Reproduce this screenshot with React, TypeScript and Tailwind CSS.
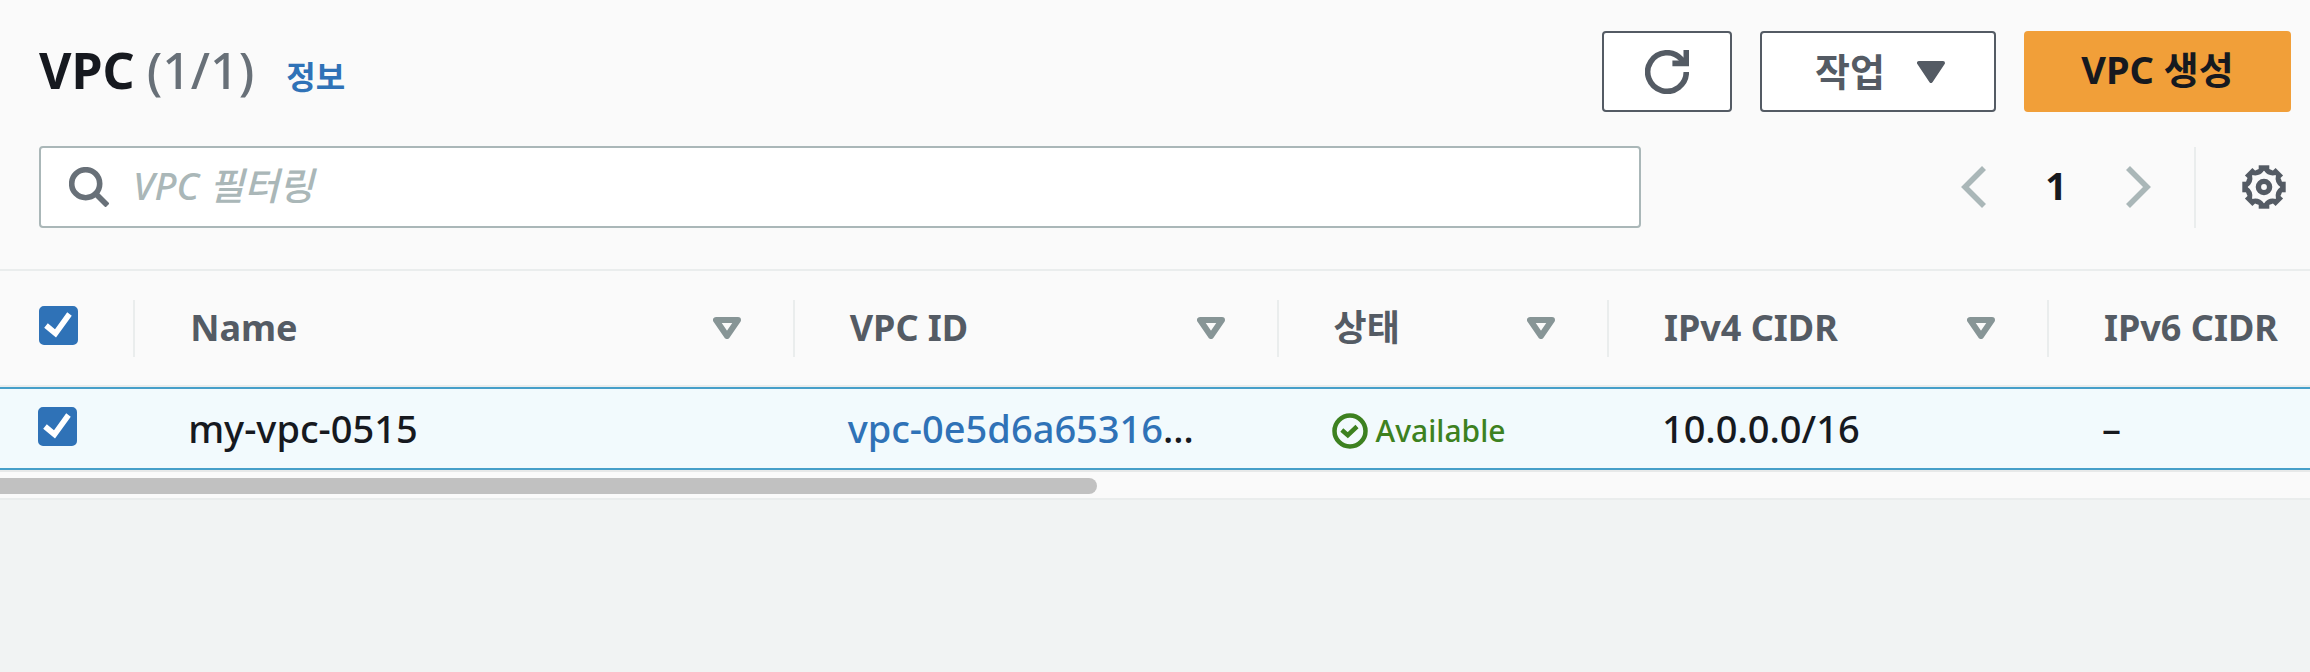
import { useState } from "react";

const columns = [
  { key: "name", label: "Name" },
  { key: "id", label: "VPC ID" },
  { key: "state", label: "상태" },
  { key: "v4", label: "IPv4 CIDR" },
  { key: "v6", label: "IPv6 CIDR" },
];

const toothAngles = [0, 45, 90, 135, 180, 225, 270, 315];

function RefreshIcon() {
  return (
    <svg viewBox="0 0 44 44" className="size-11" fill="none" stroke="currentColor" strokeWidth="5.6" aria-hidden="true">
      <path d="M41.300 22A19.300 19.300 0 1 1 36.500 9.300L39 12.500" />
      <path d="M41.300 0v13.400H27.400" />
    </svg>
  );
}

function SearchIcon() {
  return (
    <svg viewBox="0 0 40 40" className="size-10 shrink-0" fill="none" stroke="currentColor" strokeWidth="5.6" aria-hidden="true">
      <circle cx="16.700" cy="16.700" r="14" />
      <path d="M26.500 26.500l12 12" />
    </svg>
  );
}

function Chevron({ flip = false }: { flip?: boolean }) {
  return (
    <svg viewBox="0 0 26 42" className="h-[42px] w-[26px]" fill="none" stroke="currentColor" strokeWidth="5.6" aria-hidden="true">
      <path d={flip ? "M3 2l19 19L3 40" : "M23 2L4 21l19 19"} />
    </svg>
  );
}

function GearIcon() {
  return (
    <svg viewBox="0 0 44 44" className="size-11" fill="currentColor" aria-hidden="true">
      <path
        fillRule="evenodd"
        d="M22 3.300a18.700 18.700 0 1 1 0 37.400a18.700 18.700 0 1 1 0-37.400zM22 5.500Q26.200 11.800 34 10Q32.200 17.800 38.500 22Q32.200 26.200 34 34Q26.200 32.200 22 38.500Q17.800 32.200 10 34Q11.800 26.200 5.500 22Q11.800 17.800 10 10Q17.800 11.800 22 5.500z"
      />
      {toothAngles.map((angle) => (
        <rect key={angle} x="16.700" y="0.300" width="10.600" height="5.200" transform={`rotate(${angle} 22 22)`} />
      ))}
      <circle cx="22" cy="22" r="5.600" fill="none" stroke="currentColor" strokeWidth="5.4" />
    </svg>
  );
}

function SortIcon() {
  return (
    <svg viewBox="0 0 28 22" className="h-[22px] w-7 shrink-0" fill="none" stroke="currentColor" strokeWidth="6" strokeLinejoin="round" aria-hidden="true">
      <path d="M3 3h22L14 19z" />
    </svg>
  );
}

function Check({ label }: { label: string }) {
  const [on, setOn] = useState(true);
  return (
    <label className="grid size-[39px] place-items-center">
      <input
        type="checkbox"
        aria-label={label}
        checked={on}
        onChange={() => setOn(!on)}
        className="col-start-1 row-start-1 size-[39px] appearance-none rounded-[5px] border-2 border-[#2f72b7] bg-white checked:bg-[#2f72b7]"
      />
      <svg viewBox="0 0 39 39" className="pointer-events-none col-start-1 row-start-1 size-[39px]" fill="none" stroke="white" strokeWidth="5.6" aria-hidden="true">
        {on && <path d="M7 19.500l9.500 8L30.500 8" />}
      </svg>
    </label>
  );
}

export default function App() {
  return (
    <div className="min-h-screen overflow-hidden bg-[#f1f3f3] font-['Noto_Sans','Noto_Sans_CJK_KR',sans-serif] text-[#16191f]">
      <section className="border-b-2 border-[#eaeded] bg-[#fafafa]">
        <header className="flex items-center justify-between pt-[31px] pr-[19px] pl-[39px]">
          <h1 className="flex items-baseline pt-1 text-[50px] leading-[60px] font-bold">
            VPC
            <span className="ml-3 font-medium text-[#687078]">(1/1)</span>
            <a href="#info" className="ml-8 text-[32px] text-[#2f72b7]">정보</a>
          </h1>
          <div className="flex gap-7 text-[38px] font-bold">
            <button type="button" aria-label="새로 고침" className="flex h-[81px] w-[130px] items-center justify-center rounded-[4px] border-2 border-[#545b64] bg-white text-[#545b64]">
              <RefreshIcon />
            </button>
            <button type="button" className="flex h-[81px] w-[236px] items-center justify-center gap-8 rounded-[4px] border-2 border-[#545b64] bg-white pl-1 text-[#545b64]">
              작업
              <svg viewBox="0 0 28 22" className="h-[22px] w-7" fill="currentColor" stroke="currentColor" strokeWidth="4" strokeLinejoin="round" aria-hidden="true">
                <path d="M2 2h24L14 20z" />
              </svg>
            </button>
            <button type="button" className="h-[81px] w-[267px] rounded-[4px] bg-[#f19f39] pb-1">VPC 생성</button>
          </div>
        </header>

        <div className="flex items-center justify-between pt-[34px] pr-6 pb-[41px] pl-[39px]">
          <label className="flex h-[82px] w-[71.3%] items-center gap-6 rounded-[4px] border-2 border-[#aab7b8] bg-white pl-7 text-[#687078]">
            <SearchIcon />
            <input
              type="search"
              aria-label="VPC 필터링"
              placeholder="VPC 필터링"
              className="min-w-0 flex-1 bg-transparent pb-1 text-[38px] font-medium italic outline-none placeholder:text-[#aab7b8]"
            />
          </label>
          <nav aria-label="페이지" className="flex h-[81px] items-center text-[#aab7b8]">
            <button type="button" aria-label="이전 페이지"><Chevron /></button>
            <button type="button" aria-current="page" className="w-[138px] pb-1 text-center text-[38px] font-bold text-[#16191f]">1</button>
            <button type="button" aria-label="다음 페이지"><Chevron flip /></button>
            <span className="ml-[43px] h-full border-l-2 border-[#eaeded]" />
            <button type="button" aria-label="기본 설정" className="ml-[46px] text-[#545b64]"><GearIcon /></button>
          </nav>
        </div>

        <div className="overflow-hidden">
          <table className="w-full table-fixed border-separate border-spacing-0 text-left text-[38px]">
            <colgroup>
              <col className="w-[5.85%]" />
              <col className="w-[28.55%]" />
              <col className="w-[20.95%]" />
              <col className="w-[14.3%]" />
              <col className="w-[19.05%]" />
              <col />
            </colgroup>
            <thead>
              <tr className="h-[118px] text-[36px]">
                <th className="border-y-2 border-[#eaeded] p-0">
                  <div className="flex h-[57px] items-start border-r-2 border-[#eaeded] pt-[6px] pl-[39px]">
                    <Check label="모두 선택" />
                  </div>
                </th>
                {columns.map((column, index) => (
                  <th key={column.key} className="border-y-2 border-[#eaeded] p-0 font-bold whitespace-nowrap text-[#545b64]">
                    <div className={index < 4 ? "flex h-[57px] items-center justify-between border-r-2 border-[#eaeded] pr-[52px] pl-[55px]" : "flex h-[57px] items-center pl-[55px]"}>
                      {column.label}
                      {index < 4 && <span className="text-[#879596]"><SortIcon /></span>}
                    </div>
                  </th>
                ))}
              </tr>
            </thead>
            <tbody>
              <tr className="h-[83px] bg-[#f2fafd] font-medium [&>td]:border-y-2 [&>td]:border-[#469fc9] [&>td]:p-0 [&>td]:whitespace-nowrap">
                <td><div className="pb-1 pl-[38px]"><Check label="my-vpc-0515" /></div></td>
                <td><div className="pl-[53px]">my-vpc-0515</div></td>
                <td><div className="pl-[53px]"><a href="#vpc" className="text-[#2f72b7]">vpc-0e5d6a65316</a>…</div></td>
                <td>
                  <div className="flex items-center gap-2 pt-1 pl-[53px] text-[30px] text-[#3d8120]">
                    <svg viewBox="0 0 36 36" className="size-9 shrink-0" fill="none" stroke="currentColor" strokeWidth="4.500" aria-hidden="true">
                      <circle cx="18" cy="18" r="15.500" />
                      <path d="M9.800 17l6 5.200L25 13.500" />
                    </svg>
                    Available
                  </div>
                </td>
                <td><div className="pl-[53px]">10.0.0.0/16</div></td>
                <td><div className="pl-[53px]">–</div></td>
              </tr>
            </tbody>
          </table>
        </div>
        <div className="h-7 border-t-2 border-[#e7e9e9] pt-[6px]">
          <div className="h-4 w-[47.5%] rounded-r-full bg-[#c1c1c1]" />
        </div>
      </section>
    </div>
  );
}
